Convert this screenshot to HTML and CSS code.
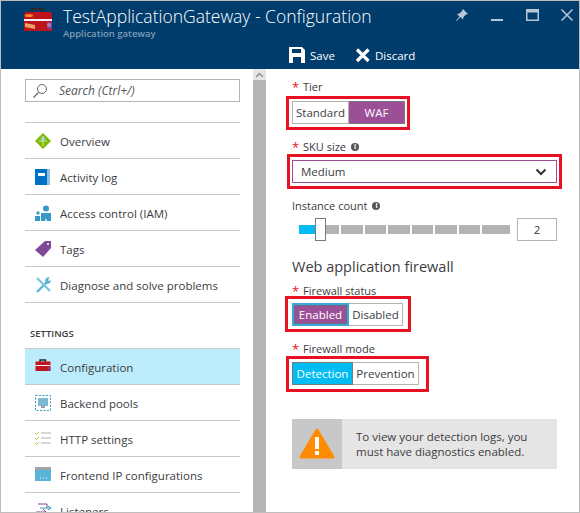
FILE: index.html
```html
<!DOCTYPE html>
<html lang="en">
<head>
    <meta charset="UTF-8">
    <meta name="viewport" content="width=device-width, initial-scale=1.0">
    <title>TestApplicationGateway - Configuration</title>
    <link rel="stylesheet" href="styles.css">
</head>
<body>
<div class="blade">
    <header class="top">
        <div class="title-row">
            <svg class="logo" width="30" height="26" viewBox="0 0 30 26">
                <path d="M9 7V3h11v4" fill="none" stroke="#2a2a2a" stroke-width="2"/>
                <path d="M1 9q0-3 3-3h22q3 0 3 3v16H1z" fill="#c0141c"/>
                <rect x="1" y="13" width="28" height="2" fill="#f2f2f2"/>
                <ellipse cx="6" cy="9.500" rx="4" ry="1.6" fill="#f08a24"/>
                <path d="M2 17l10 2v4l-10-2z" fill="#f2a36a"/>
                <rect x="24" y="16" width="5" height="7" fill="#8d3a8d"/>
                <circle cx="26" cy="19" r="2" fill="#a77fc4"/>
            </svg>
            <div class="titles">
                <h1>TestApplicationGateway - Configuration</h1>
                <div class="subtitle">Application gateway</div>
            </div>
            <div class="win-btns">
                <svg width="14" height="14" viewBox="0 0 14 14"><path d="M8 1l5 5-2 .5-2.500 2.500-.5 2.500-2.500-2.500L1.500 13 1 12.500l3.500-4L2 6l2.500-.5L7 3z" fill="#b9c6d3"/></svg>
                <svg width="14" height="14" viewBox="0 0 14 14"><rect x="1" y="11" width="12" height="2" fill="#b9c6d3"/></svg>
                <svg width="14" height="14" viewBox="0 0 14 14"><path d="M1 1h13v12H1zM2.500 4.500v7h10v-7z" fill="#b9c6d3" fill-rule="evenodd"/></svg>
                <svg width="14" height="14" viewBox="0 0 14 14"><path d="M1.500 1.500l11 11M12.500 1.500l-11 11" stroke="#b9c6d3" stroke-width="1.500"/></svg>
            </div>
        </div>
        <div class="commands">
            <span class="cmd">
                <svg width="16" height="16" viewBox="0 0 16 16"><path d="M0 0h13l3 3v13H0zM3 2v4h9V2zM4 10v6h8v-6z" fill="#fff" fill-rule="evenodd"/></svg>
                Save
            </span>
            <span class="cmd">
                <svg width="15" height="15" viewBox="0 0 15 15"><path d="M2 1.500l11.500 11.500M13.500 1.500L2 13" stroke="#fff" stroke-width="3.200"/></svg>
                Discard
            </span>
        </div>
    </header>

    <div class="panes">
        <nav class="menu">
            <div class="search">
                <svg width="16" height="16" viewBox="0 0 16 16"><circle cx="10" cy="6" r="4.500" fill="none" stroke="#666"/><path d="M6.500 9.500L1.500 14.500" stroke="#666" stroke-width="1.200"/></svg>
                <span>Search (Ctrl+/)</span>
            </div>
            <ul class="items first">
                <li>
                    <svg width="16" height="16" viewBox="0 0 16 16"><path d="M8 0l8 8-8 8-8-8z" fill="#7fba00"/><path d="M8 3v10M4 8h8" stroke="#d6e9a8"/><circle cx="8" cy="6" r="2" fill="#9fd6e8"/></svg>
                    Overview
                </li>
                <li>
                    <svg width="16" height="16" viewBox="0 0 16 16"><rect x="0" y="0" width="15" height="16" fill="#0072c6"/><rect x="12" y="0" width="3" height="16" fill="#8fc0e6"/><rect x="3" y="4" width="7" height="3" fill="#fff"/></svg>
                    Activity log
                </li>
                <li>
                    <svg width="16" height="16" viewBox="0 0 16 16"><circle cx="11" cy="3.500" r="3" fill="#3999c6"/><path d="M6 16V8h10v8h-4l-1-3-1 3z" fill="#3999c6"/><circle cx="3" cy="8" r="1.700" fill="#3999c6"/><path d="M0 16v-5h5v5z" fill="#3999c6"/></svg>
                    Access control (IAM)
                </li>
                <li>
                    <svg width="16" height="16" viewBox="0 0 16 16"><path d="M10 0h6v7l-8 9-8-7z" fill="#804998"/><circle cx="13" cy="3" r="1" fill="#fff"/></svg>
                    Tags
                </li>
                <li>
                    <svg width="16" height="16" viewBox="0 0 16 16"><path d="M2 15L13 4" stroke="#59b4d9" stroke-width="2.400"/><path d="M11 1l4-1-2 3 1 1 2-1-1 3-3 1-2-3z" fill="#59b4d9"/><path d="M2 1l13 13" stroke="#7fc6e2" stroke-width="2.400"/></svg>
                    Diagnose and solve problems
                </li>
            </ul>
            <div class="section">SETTINGS</div>
            <ul class="items">
                <li class="active">
                    <svg width="16" height="12" viewBox="0 0 30 24"><path d="M9 6V2h11v4" fill="none" stroke="#2a2a2a" stroke-width="3"/><rect x="0" y="5" width="30" height="19" fill="#c0141c"/><rect x="0" y="12" width="30" height="2" fill="#f2f2f2"/><rect x="24" y="16" width="6" height="7" fill="#8d3a8d"/></svg>
                    Configuration
                </li>
                <li>
                    <svg width="16" height="16" viewBox="0 0 16 16"><rect x=".5" y=".5" width="15" height="15" fill="none" stroke="#3999c6" stroke-dasharray="2 1.500"/><rect x="3" y="3" width="10" height="8" fill="#7db8d4"/><rect x="6" y="11" width="4" height="2" fill="#a0a0a0"/></svg>
                    Backend pools
                </li>
                <li>
                    <svg width="16" height="14" viewBox="0 0 16 14"><path d="M6 2h10M6 7h10M6 12h10" stroke="#b0b0b0"/><path d="M0 2l1.500 1.500L4 1M0 7l1.500 1.500L4 6M0 12l1.500 1.500L4 11" fill="none" stroke="#a5c84a"/></svg>
                    HTTP settings
                </li>
                <li>
                    <svg width="16" height="14" viewBox="0 0 16 14"><rect width="16" height="14" fill="#59b4d9"/><rect width="16" height="3" fill="#a0a5a8"/><path d="M5 11h1M8 11h1M11 11h1" stroke="#fff"/></svg>
                    Frontend IP configurations
                </li>
                <li>
                    <svg width="16" height="14" viewBox="0 0 16 14"><path d="M3 1h9v4M1 9h10M8 6l3 3-3 3" fill="none" stroke="#804998"/><path d="M5 5h11M13 3l3 2-3 2" fill="none" stroke="#3999c6"/></svg>
                    Listeners
                </li>
            </ul>
        </nav>

        <div class="scrollbar">
            <div class="scroll-up">
                <svg width="9" height="6" viewBox="0 0 9 6"><path d="M1 5l3.500-3.500L8 5" fill="none" stroke="#8a8a8a" stroke-width="1.300"/></svg>
            </div>
        </div>

        <main class="form">
            <div class="label"><span class="req">*</span>Tier</div>
            <div class="mark mark-tier">
                <div class="toggle">
                    <span class="opt w-standard">Standard</span>
                    <span class="opt on-purple w-waf">WAF</span>
                </div>
            </div>

            <div class="label tight"><span class="req">*</span>SKU size <span class="info">i</span></div>
            <div class="mark mark-sku">
                <div class="select">
                    <span>Medium</span>
                    <svg width="12" height="8" viewBox="0 0 12 8"><path d="M1.500 1.500L6 6l4.500-4.500" fill="none" stroke="#333" stroke-width="2"/></svg>
                </div>
            </div>

            <div class="label">Instance count <span class="info">i</span></div>
            <div class="slider-row">
                <div class="slider">
                    <span class="fill"></span>
                    <span class="handle"></span>
                    <span class="seg s1"></span>
                    <span class="seg"></span>
                    <span class="seg"></span>
                    <span class="seg"></span>
                    <span class="seg"></span>
                    <span class="seg"></span>
                    <span class="seg"></span>
                    <span class="seg s8"></span>
                </div>
                <div class="count">2</div>
            </div>

            <h2>Web application firewall</h2>

            <div class="label tighter"><span class="req">*</span>Firewall status</div>
            <div class="mark mark-status">
                <div class="toggle">
                    <span class="opt on-purple focus w-enabled">Enabled</span>
                    <span class="opt w-disabled">Disabled</span>
                </div>
            </div>

            <div class="label tight"><span class="req">*</span>Firewall mode</div>
            <div class="mark mark-mode">
                <div class="toggle">
                    <span class="opt on-blue w-detection">Detection</span>
                    <span class="opt w-prevention">Prevention</span>
                </div>
            </div>

            <div class="notice">
                <div class="notice-icon">
                    <svg width="36" height="32" viewBox="0 0 36 32"><path d="M18 2L34 29H2z" fill="#ff8c00" stroke="#ff8c00" stroke-width="3" stroke-linejoin="round"/><rect x="16" y="9" width="4" height="12" fill="#fff"/><rect x="16" y="23" width="4" height="4" fill="#fff"/></svg>
                </div>
                <p>To view your detection logs, you must have diagnostics enabled.</p>
            </div>
        </main>
    </div>
</div>
</body>
</html>
```

FILE: styles.css
```css
* {
    box-sizing: border-box;
}

html,
body {
    margin: 0;
    height: 100%;
}

body {
    font-family: "Open Sans", "Liberation Sans", sans-serif;
    font-size: 12px;
    color: #3c3c41;
}

.blade {
    width: 580px;
    height: 513px;
    border: 1px solid #bdbdbd;
    display: flex;
    flex-direction: column;
    overflow: hidden;
    background: #fff;
}

/* header */
.top {
    height: 68px;
    flex: none;
    background: #003c6c;
    color: #fff;
}

.title-row {
    display: flex;
    height: 40px;
}

.logo {
    margin: 5px 0 0 22px;
}

.titles {
    margin-left: 10px;
}

h1 {
    margin: 3px 0 0;
    font-size: 17.5px;
    font-weight: 300;
    line-height: 24px;
    white-space: nowrap;
}

.subtitle {
    font-size: 9.5px;
    font-weight: 600;
    line-height: 12px;
    color: #7f9db5;
}

.win-btns {
    margin-left: auto;
    display: flex;
    gap: 21px;
    padding: 7px 5px 0 0;
    height: 24px;
}

.commands {
    display: flex;
    gap: 20px;
    padding-left: 288px;
    height: 28px;
    align-items: center;
}

.cmd {
    display: flex;
    align-items: center;
    gap: 5px;
    font-size: 11.5px;
}

/* left menu */
.panes {
    flex: 1;
    display: flex;
    min-height: 0;
}

.menu {
    width: 252px;
    flex: none;
    padding: 10px 13px 0 24px;
}

.search {
    height: 23px;
    border: 1px solid #b4b4b4;
    display: flex;
    align-items: center;
    gap: 11px;
    padding-left: 6px;
    font-style: italic;
    font-size: 12px;
    color: #55555a;
}

.items {
    list-style: none;
    margin: 0;
    padding: 0;
}

.items.first {
    margin-top: 20px;
    border-top: 1px solid #c8c8c8;
}

.items li {
    height: 36px;
    border-bottom: 1px solid #c8c8c8;
    display: flex;
    align-items: center;
    white-space: nowrap;
    font-size: 11.5px;
    position: relative;
    padding: 2px 0 0 35px;
}

.items li svg {
    position: absolute;
    left: 10px;
    top: 10px;
}

.items li.active {
    background: #bdedfc;
}

.section {
    height: 46px;
    padding: 24px 0 0 5px;
    font-size: 9.5px;
    font-weight: 600;
    line-height: 14px;
    border-bottom: 1px solid #c8c8c8;
}

/* scrollbar */
.scrollbar {
    width: 13px;
    flex: none;
    background: #b4b4b4;
}

.scroll-up {
    height: 11px;
    background: #e6e6e6;
    display: flex;
    align-items: center;
    justify-content: center;
}

/* form */
.form {
    flex: 1;
    padding: 10px 0 0 26px;
    min-width: 0;
}

.label {
    height: 17px;
    line-height: 16px;
    font-size: 11px;
    white-space: nowrap;
    display: flex;
    align-items: flex-start;
}

.label.tight {
    margin-bottom: -2px;
}

.label.tighter {
    margin-bottom: -4px;
}

.req {
    color: #e81123;
    width: 11px;
    font-size: 13px;
    line-height: 13px;
    height: 12px;
    margin-top: 2px;
}

.info {
    width: 8px;
    height: 8px;
    border-radius: 50%;
    background: #55555a;
    color: #fff;
    font-size: 7px;
    line-height: 8px;
    font-weight: 700;
    text-align: center;
    margin: 4px 0 0 5px;
}

.mark {
    width: fit-content;
    margin-bottom: 9px;
    border: 3px solid #e81123;
}

.mark-tier {
    margin-left: -6px;
    padding: 2px 2px 3px 3px;
}

.mark-sku {
    margin-left: -5px;
    padding: 3px 2px 3px 2px;
}

.mark-status {
    margin-left: -7px;
    padding: 4px 5px 3px 4px;
}

.mark-mode {
    margin-left: -6px;
    padding: 3px 7px 4px 3px;
}

.toggle {
    display: flex;
    height: 23px;
}

.opt {
    display: flex;
    align-items: center;
    justify-content: center;
    font-size: 11.5px;
    border: 1px solid #b4b4b4;
}

.opt + .opt {
    border-left: 0;
}

.w-standard { width: 57px; }
.w-waf { width: 56px; }
.w-enabled { width: 57px; }
.w-disabled { width: 54px; }
.w-detection { width: 61px; }
.w-prevention { width: 66px; }

.on-purple {
    background: #9b4f96;
    color: #fff;
    border-color: #7a7a7a;
}

.on-purple.focus {
    border: 2px solid #3ba7d6;
    outline: 1px solid #6b6b80;
    outline-offset: -3px;
}

.on-blue {
    background: #00bcf2;
    color: #fff;
    border-color: #7a7a7a;
}

.select {
    width: 265px;
    height: 23px;
    border: 1px solid #9b4f96;
    display: flex;
    align-items: center;
    justify-content: space-between;
    padding: 0 9px 0 8px;
    font-size: 11.5px;
}

.slider-row {
    display: flex;
    align-items: center;
    margin-top: 3px;
}

.slider {
    width: 225px;
    height: 23px;
    display: flex;
    align-items: center;
    gap: 2px;
    position: relative;
    padding-left: 23px;
}

.fill {
    position: absolute;
    left: 7px;
    width: 16px;
    height: 9px;
    background: #00bcf2;
}

.handle {
    position: absolute;
    left: 23px;
    width: 11px;
    height: 23px;
    background: #fff;
    border: 1px solid #7a7a7a;
    z-index: 1;
}

.seg {
    width: 21.5px;
    height: 9px;
    background: #b4b4b4;
}

.s1 {
    width: 13px;
    margin-left: 11px;
}

.s8 {
    width: 28px;
}

.count {
    width: 40px;
    height: 23px;
    border: 1px solid #b4b4b4;
    text-align: center;
    line-height: 21px;
    font-size: 11.5px;
}

h2 {
    margin: 16px 0 6px;
    font-size: 14.5px;
    font-weight: 400;
    line-height: 20px;
}

/* warning box */
.notice {
    display: flex;
    width: 265px;
    height: 50px;
    margin-top: 27px;
    background: #e5e5e5;
}

.notice-icon {
    width: 50px;
    flex: none;
    background: #c8c8c8;
    display: flex;
    align-items: center;
    justify-content: center;
}

.notice p {
    margin: 0;
    padding: 11px 22px 0 14px;
    font-size: 11.5px;
    line-height: 14.5px;
}
```
